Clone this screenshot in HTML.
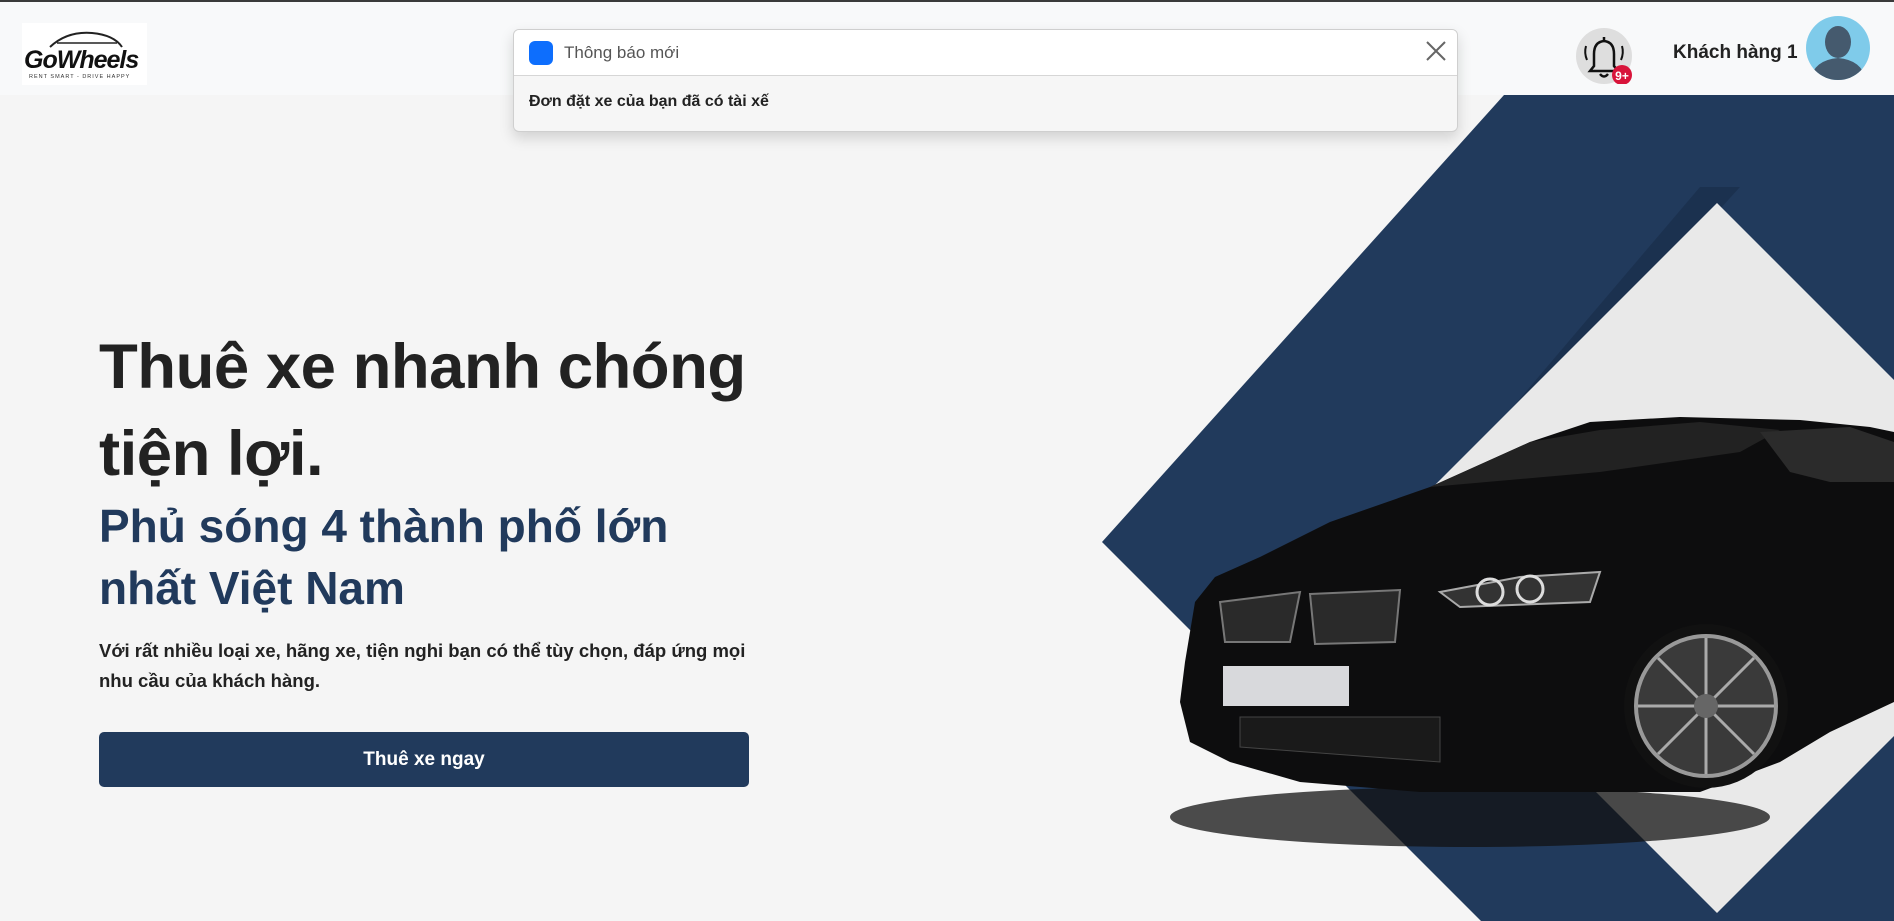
<!DOCTYPE html>
<html><head><meta charset="utf-8"><style>
*{margin:0;padding:0;box-sizing:border-box}
body{width:1894px;height:919px;overflow:hidden;background:#f5f5f5;font-family:"Liberation Sans",Arial,sans-serif;position:relative;border-top:2px solid #3a3a3a}
.hdr{position:absolute;left:0;top:0;width:1894px;height:93px;background:#f8f9fa}
.logo{position:absolute;left:22px;top:21px;width:125px;height:62px;background:#fff;text-align:center}
.logo .t{font-weight:700;font-style:italic;font-size:25px;color:#111;position:absolute;left:2px;top:23px;letter-spacing:-1px}
.logo .s{position:absolute;left:7px;top:51px;font-size:5.5px;color:#333;letter-spacing:1px}
.toast{position:absolute;left:513px;top:27px;width:945px;height:103px;border:1px solid #cfcfcf;border-radius:6px;background:#f6f6f6;box-shadow:0 6px 14px rgba(0,0,0,.15);overflow:hidden}
.th{height:46px;background:#fff;border-bottom:1px solid #d6d6d6;position:relative}
.th .sq{position:absolute;left:15px;top:11px;width:24px;height:24px;background:#0d6efd;border-radius:6px}
.th .tt{position:absolute;left:50px;top:13px;font-size:17px;color:#555}
.th .x{position:absolute;right:10px;top:10px}
.tb{position:absolute;left:15px;top:63px;font-size:16px;font-weight:700;color:#222}
.bell{position:absolute;left:1576px;top:26px;width:56px;height:56px;border-radius:50%;background:#dedede}
.name{position:absolute;left:1673px;top:40px;font-size:19px;font-weight:700;color:#222}
.av{position:absolute;left:1806px;top:14px;width:64px;height:64px;border-radius:50%;background:#7fcbea;overflow:hidden}
h1{position:absolute;left:99px;top:322px;font-size:63.5px;line-height:87px;font-weight:700;color:#222;letter-spacing:-0.5px}
h2{position:absolute;left:99px;top:493px;font-size:46px;line-height:62px;font-weight:700;color:#213a5c}
p{position:absolute;left:99px;top:634px;font-size:18.5px;line-height:30px;font-weight:700;color:#222;width:680px}
.btn{position:absolute;left:99px;top:730px;width:650px;height:55px;background:#213a5c;border-radius:5px;color:#fff;font-weight:700;font-size:19px;text-align:center;line-height:55px}
svg.bg{position:absolute;left:0;top:0}
</style></head><body>
<svg class="bg" width="1894" height="919">
<defs><linearGradient id="sh" x1="0" y1="0" x2="1" y2="1"><stop offset="0" stop-color="#1a2d48"/><stop offset="1" stop-color="#213a5c"/></linearGradient></defs>
<polygon points="1102,540 1504,93 1894,93 1894,919 1481,919" fill="#213a5c"/>
<polygon points="1330,620 1700,185 1740,185 1362,600" fill="#1a2e4a" opacity=".7"/>
<polygon points="1717,201 2072,556 1717,911 1362,556" fill="#e9e9e9"/>
<ellipse cx="1470" cy="815" rx="300" ry="30" fill="#111" opacity=".75"/>
<path d="M1185,660 L1195,600 L1215,575 L1260,555 L1330,520 L1430,485 L1530,440 L1590,420 L1680,415 L1800,418 L1870,425 L1894,430 L1894,700 L1830,730 L1780,760 L1700,790 L1580,790 L1420,790 L1300,780 L1230,760 L1190,740 L1180,700 Z" fill="#0d0d0e"/>
<path d="M1430,485 L1530,440 L1600,428 L1700,420 L1780,428 L1740,450 L1600,470 Z" fill="#222"/>
<path d="M1760,430 L1850,425 L1894,440 L1894,480 L1830,480 L1790,470 Z" fill="#2b2b2b"/>
<path d="M1220,600 L1300,590 L1290,640 L1225,640 Z" fill="#2a2a2a" stroke="#777" stroke-width="2"/>
<path d="M1310,592 L1400,588 L1395,640 L1315,642 Z" fill="#2a2a2a" stroke="#777" stroke-width="2"/>
<path d="M1440,590 L1520,575 L1600,570 L1590,600 L1460,605 Z" fill="#333" stroke="#aaa" stroke-width="2"/>
<circle cx="1490" cy="590" r="13" fill="none" stroke="#ddd" stroke-width="3"/>
<circle cx="1530" cy="587" r="13" fill="none" stroke="#ddd" stroke-width="3"/>
<rect x="1223" y="664" width="126" height="40" fill="#d8d9dc"/>
<path d="M1240,715 L1440,715 L1440,760 L1240,745 Z" fill="#1a1a1a" stroke="#444"/>
<circle cx="1706" cy="704" r="82" fill="#111"/>
<circle cx="1706" cy="704" r="70" fill="#3a3a3a" stroke="#999" stroke-width="4"/>
<g stroke="#aaa" stroke-width="3">
<line x1="1706" y1="636" x2="1706" y2="772"/><line x1="1638" y1="704" x2="1774" y2="704"/>
<line x1="1658" y1="656" x2="1754" y2="752"/><line x1="1754" y1="656" x2="1658" y2="752"/>
</g>
<circle cx="1706" cy="704" r="12" fill="#666"/>
</svg>
<div class="hdr"></div>
<div class="logo"><svg width="125" height="30" style="position:absolute;left:0;top:2px"><path d="M28,22 Q45,6 70,8 Q92,10 100,22" fill="none" stroke="#222" stroke-width="2"/><path d="M35,18 L95,18" stroke="#222" stroke-width="1.5"/></svg><div class="t">GoWheels</div><div class="s">RENT SMART - DRIVE HAPPY</div></div>
<div class="toast"><div class="th"><div class="sq"></div><div class="tt">Thông báo mới</div><svg class="x" width="22" height="22"><path d="M2,2L20,20M20,2L2,20" stroke="#666" stroke-width="2"/></svg></div><div class="tb">Đơn đặt xe của bạn đã có tài xế</div></div>
<div class="bell"><svg width="56" height="56"><path d="M28,9 L28,12 M18,38 L18,26 Q18,14 28,13 Q38,14 38,26 L38,38 L42,43 L14,43 Z M24,46 Q28,51 32,46" fill="none" stroke="#111" stroke-width="2.5"/><path d="M10,18 Q8,25 11,32 M46,18 Q48,25 45,32" fill="none" stroke="#111" stroke-width="2"/><circle cx="46" cy="47" r="10" fill="#d8143a"/><text x="46" y="52" font-size="12" font-weight="700" fill="#fff" text-anchor="middle" font-family="Liberation Sans">9+</text></svg></div>
<div class="name">Khách hàng 1</div>
<div class="av"><svg width="64" height="64"><ellipse cx="32" cy="26" rx="13" ry="16" fill="#455a6e"/><path d="M4,64 Q8,44 32,42 Q56,44 60,64 Z" fill="#455a6e"/></svg></div>
<h1>Thuê xe nhanh chóng<br>tiện lợi.</h1>
<h2>Phủ sóng 4 thành phố lớn<br>nhất Việt Nam</h2>
<p>Với rất nhiều loại xe, hãng xe, tiện nghi bạn có thể tùy chọn, đáp ứng mọi nhu cầu của khách hàng.</p>
<div class="btn">Thuê xe ngay</div>
</body></html>
